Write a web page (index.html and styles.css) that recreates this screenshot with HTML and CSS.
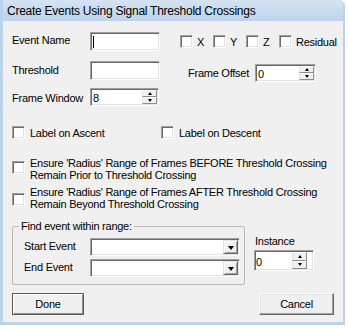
FILE: index.html
```html
<!DOCTYPE html>
<html lang="en">
<head>
<meta charset="utf-8">
<title>Create Events Using Signal Threshold Crossings</title>
<link rel="stylesheet" href="styles.css">
</head>
<body>
<div class="window">
  <div class="titlebar">Create Events Using Signal Threshold Crossings</div>
  <div class="client">
    <div class="row r1">
      <span class="lbl lbl-top">Event Name</span>
      <div class="edit w70"><span class="caret"></span></div>
      <div class="axes">
        <label class="chk ax"><span class="box"></span>X</label>
        <label class="chk ax"><span class="box"></span>Y</label>
        <label class="chk ax"><span class="box"></span>Z</label>
        <label class="chk"><span class="box"></span>Residual</label>
      </div>
    </div>

    <div class="row r2">
      <span class="lbl lh19">Threshold</span>
      <div class="edit w70"></div>
      <span class="lbl-offset">Frame Offset</span>
      <div class="spin w61 offset-spin">
        <span class="val">0</span>
        <span class="spinbtns"><span class="sb up"></span><span class="sb down"></span></span>
      </div>
    </div>

    <div class="row r3">
      <span class="lbl lh20">Frame Window</span>
      <div class="spin w69">
        <span class="val">8</span>
        <span class="spinbtns"><span class="sb up"></span><span class="sb down"></span></span>
      </div>
    </div>

    <div class="row r4">
      <label class="chk asc"><span class="box"></span>Label on Ascent</label>
      <label class="chk"><span class="box"></span>Label on Descent</label>
    </div>

    <div class="multi r5">
      <span class="box"></span>
      <span class="txt">Ensure 'Radius' Range of Frames BEFORE Threshold Crossing<br>Remain Prior to Threshold Crossing</span>
    </div>

    <div class="multi r6">
      <span class="box"></span>
      <span class="txt">Ensure 'Radius' Range of Frames AFTER Threshold Crossing<br>Remain Beyond Threshold Crossing</span>
    </div>

    <div class="grouprow">
      <fieldset class="group">
        <legend>Find event within range:</legend>
        <div class="grp-body">
          <div class="grp-row">
            <span class="grp-lbl">Start Event</span>
            <div class="combo"><span class="combo-val"></span><span class="drop"></span></div>
          </div>
          <div class="grp-row">
            <span class="grp-lbl">End Event</span>
            <div class="combo"><span class="combo-val"></span><span class="drop"></span></div>
          </div>
        </div>
      </fieldset>
      <div class="inst">
        <div class="inst-lbl">Instance</div>
        <div class="spin inst-spin">
          <span class="val">0</span>
          <span class="spinbtns"><span class="sb up"></span><span class="sb down"></span></span>
        </div>
      </div>
    </div>

    <div class="btnrow">
      <button class="btn done">Done</button>
      <button class="btn cancel">Cancel</button>
    </div>
  </div>
</div>
</body>
</html>
```

FILE: styles.css
```css
* { box-sizing: border-box; }

body {
  margin: 0;
  background: #ffffff;
  font-family: "Liberation Sans", Arial, sans-serif;
  font-size: 11px;
  letter-spacing: -0.25px;
  color: #000;
}

.window {
  width: 345px;
  height: 325px;
  border-left: 3px solid #bcd2ea;
  border-right: 2px solid #bcd2ea;
  border-bottom: 3px solid #bcd2ea;
  border-top-right-radius: 6px;
  background: #f0f0f0;
  display: flex;
  flex-direction: column;
  overflow: hidden;
}

.titlebar {
  height: 21px;
  flex: none;
  background: linear-gradient(#d5e3f3, #bdd3eb);
  font-size: 12px;
  line-height: 19px;
  padding: 2px 0 0 4px;
  white-space: nowrap;
  color: #000;
}

.client {
  flex: 1;
  padding: 11px 9px 0 9px;
}

.row { display: flex; }

.lbl { width: 78px; flex: none; white-space: nowrap; }
.lbl-top { align-self: flex-start; line-height: 17px; }
.lh19 { line-height: 19px; }
.lh20 { line-height: 20px; }

/* sunken controls */
.edit, .spin, .combo, .box {
  background: #fff;
  border: 1px solid;
  border-color: #a0a0a0 #ffffff #ffffff #a0a0a0;
  box-shadow: inset 1px 1px #696969, inset -1px -1px #e3e3e3;
}

.edit {
  height: 19px;
  padding: 1px;
  display: flex;
  align-items: center;
  flex: none;
}
.w70 { width: 70px; }

.caret {
  width: 1px;
  height: 12px;
  margin-left: 1px;
  background: #000;
}

.r1 { height: 19px; align-items: center; }

.axes {
  margin-left: 20px;
  display: flex;
  align-items: center;
}

.chk {
  display: flex;
  align-items: center;
  gap: 4px;
  white-space: nowrap;
}
.ax { width: 33px; }

.box {
  width: 13px;
  height: 13px;
  flex: none;
}

.r2 { margin-top: 10px; height: 21px; align-items: flex-start; }

.lbl-offset {
  margin-left: 28px;
  width: 67px;
  margin-top: 3px;
  line-height: 18px;
  white-space: nowrap;
  flex: none;
}

.spin {
  height: 18px;
  padding: 1px;
  display: flex;
  flex: none;
}
.offset-spin { margin-top: 3px; }
.w61 { width: 61px; }
.w69 { width: 69px; }

.val {
  flex: 1;
  padding: 2px 0 0 1px;
  line-height: 12px;
}

.spinbtns {
  width: 15px;
  display: flex;
  flex-direction: column;
  flex: none;
}

.sb {
  flex: 1;
  background: #f0f0f0;
  border: 1px solid;
  border-color: #ffffff #8c8c8c #8c8c8c #e3e3e3;
  display: flex;
  align-items: center;
  justify-content: center;
}
.sb::after {
  content: "";
  width: 0;
  height: 0;
  border-left: 2.5px solid transparent;
  border-right: 2.5px solid transparent;
}
.up::after { border-bottom: 3px solid #000; }
.down::after { border-top: 3px solid #000; }

.r3 { margin-top: 6px; height: 18px; align-items: flex-start; }

.r4 { margin-top: 20px; height: 13px; align-items: center; }
.r4 .chk { gap: 5px; }
.asc { width: 149px; }

.multi {
  display: flex;
  align-items: flex-start;
  gap: 5px;
}
.multi .txt { line-height: 12px; white-space: nowrap; }
.r5 { margin-top: 18px; }
.r5 .box { margin-top: 4px; }
.r6 { margin-top: 5px; }
.r6 .box { margin-top: 7px; }

.grouprow {
  display: flex;
  align-items: flex-start;
  margin-top: 10px;
}

.group {
  margin: 0;
  padding: 0;
  width: 233px;
  border: 1px solid #b9b9b9;
  border-radius: 2px;
  min-inline-size: 0;
}

.group legend {
  margin-left: 6px;
  padding: 0 2px;
  line-height: 12px;
}

.grp-body {
  padding: 6px 4px 7px 11px;
  display: flex;
  flex-direction: column;
  gap: 3px;
}

.grp-row { display: flex; height: 18px; }

.grp-lbl {
  width: 66px;
  flex: none;
  line-height: 16px;
  white-space: nowrap;
}

.combo {
  width: 150px;
  height: 18px;
  padding: 1px;
  display: flex;
}
.combo-val { flex: 1; }

.drop {
  width: 15px;
  flex: none;
  background: #f0f0f0;
  border: 1px solid;
  border-color: #e3e3e3 #696969 #696969 #e3e3e3;
  box-shadow: inset 1px 1px #fff, inset -1px -1px #a0a0a0;
  display: flex;
  align-items: center;
  justify-content: center;
}
.drop::after {
  content: "";
  width: 0;
  height: 0;
  border-left: 3.5px solid transparent;
  border-right: 3.5px solid transparent;
  border-top: 4px solid #000;
  margin-top: 1px;
}

.inst {
  margin-left: 9px;
  padding-top: 15px;
}
.inst-lbl { line-height: 12px; padding-left: 1px; }
.inst-spin {
  margin-top: 3px;
  width: 60px;
  height: 21px;
}
.inst-spin .val { padding-top: 4px; padding-left: 0; }
.inst-spin .spinbtns { margin-right: 5px; }

.btnrow {
  display: flex;
  justify-content: space-between;
  margin-top: 8px;
}

.btn {
  height: 22px;
  margin: 0;
  padding: 0;
  font: inherit;
  letter-spacing: inherit;
  color: #000;
  background: #f0f0f0;
  border: 1px solid;
  border-color: #ffffff #696969 #696969 #ffffff;
  box-shadow: inset -1px -1px #a0a0a0, inset 1px 1px #e3e3e3;
  display: flex;
  align-items: center;
  justify-content: center;
}

.done {
  width: 72px;
  border-color: #5a5a5a;
  box-shadow: inset 1px 1px #ffffff, inset -1px -1px #8c8c8c;
}

.cancel { width: 75px; }
```
